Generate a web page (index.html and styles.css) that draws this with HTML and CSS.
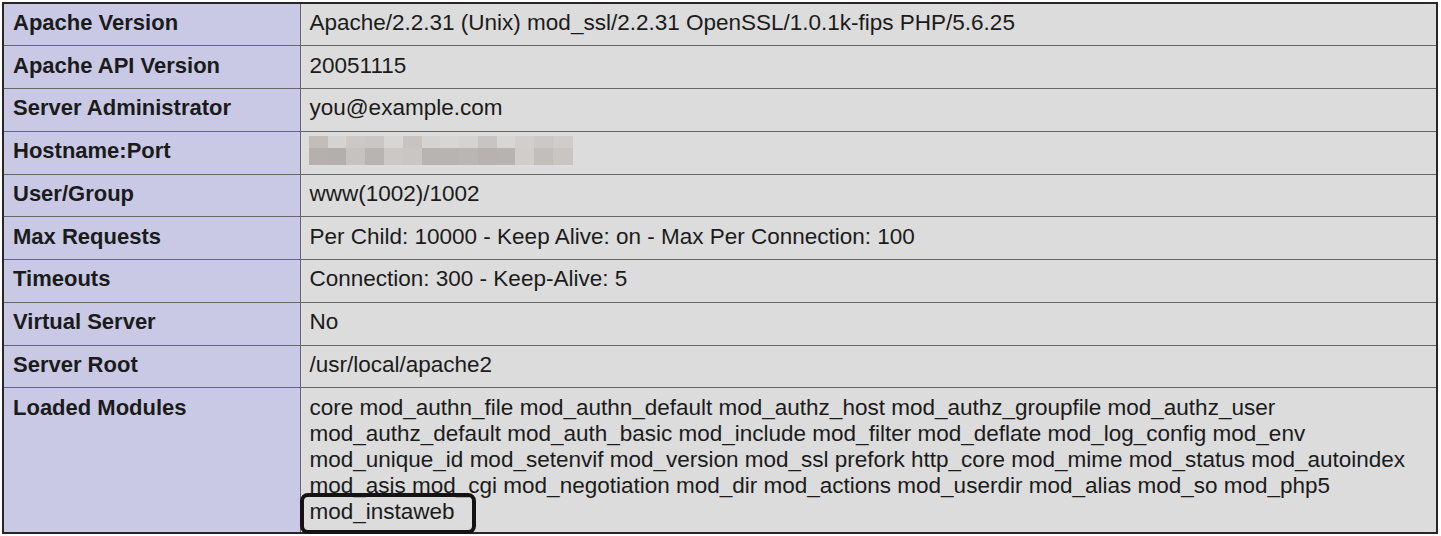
FILE: index.html
```html
<!DOCTYPE html>
<html lang="en">
<head>
<meta charset="utf-8">
<title>phpinfo - apache2handler</title>
<link rel="stylesheet" href="styles.css">
</head>
<body>
<table class="info">
  <tbody>
    <tr><td class="e">Apache Version</td><td class="v">Apache/2.2.31 (Unix) mod_ssl/2.2.31 OpenSSL/1.0.1k-fips PHP/5.6.25</td></tr>
    <tr><td class="e">Apache API Version</td><td class="v">20051115</td></tr>
    <tr><td class="e">Server Administrator</td><td class="v">you@example.com</td></tr>
    <tr><td class="e">Hostname:Port</td><td class="v">
      <svg class="blur" width="264" height="30" viewBox="0 0 264 30" aria-label="hidden hostname">
        <rect x="0" y="0" width="264" height="30" fill="#dcdcdc"/>
        <rect x="0" y="0" width="19" height="12" fill="#c0bdba"/>
        <rect x="19" y="0" width="18" height="12" fill="#d5d3d1"/>
        <rect x="37" y="0" width="19" height="12" fill="#cbc8c5"/>
        <rect x="56" y="0" width="19" height="12" fill="#c9c6c4"/>
        <rect x="75" y="0" width="19" height="12" fill="#d8d6d4"/>
        <rect x="94" y="0" width="19" height="12" fill="#c6c3c0"/>
        <rect x="113" y="0" width="18" height="12" fill="#d5d3d1"/>
        <rect x="131" y="0" width="19" height="12" fill="#d8d6d4"/>
        <rect x="150" y="0" width="19" height="12" fill="#d5d3d1"/>
        <rect x="169" y="0" width="19" height="12" fill="#c8c4c2"/>
        <rect x="188" y="0" width="18" height="12" fill="#d8d6d4"/>
        <rect x="206" y="0" width="19" height="12" fill="#d1cecc"/>
        <rect x="225" y="0" width="19" height="12" fill="#cbc8c6"/>
        <rect x="244" y="0" width="20" height="12" fill="#cfccca"/>
        <rect x="0" y="12" width="19" height="17" fill="#b5b0ad"/>
        <rect x="19" y="12" width="18" height="17" fill="#b3afac"/>
        <rect x="37" y="12" width="19" height="17" fill="#c5c2c0"/>
        <rect x="56" y="12" width="19" height="17" fill="#b8b4b1"/>
        <rect x="75" y="12" width="19" height="17" fill="#cbc8c6"/>
        <rect x="94" y="12" width="19" height="17" fill="#c9c6c4"/>
        <rect x="113" y="12" width="18" height="17" fill="#b8b4b1"/>
        <rect x="131" y="12" width="19" height="17" fill="#b8b4b1"/>
        <rect x="150" y="12" width="19" height="17" fill="#bab6b4"/>
        <rect x="169" y="12" width="19" height="17" fill="#b7b1b0"/>
        <rect x="188" y="12" width="18" height="17" fill="#b7b3b1"/>
        <rect x="206" y="12" width="19" height="17" fill="#d0cdcb"/>
        <rect x="225" y="12" width="19" height="17" fill="#c2beb9"/>
        <rect x="244" y="12" width="20" height="17" fill="#c8c5c3"/>
      </svg>
    </td></tr>
    <tr><td class="e">User/Group</td><td class="v">www(1002)/1002</td></tr>
    <tr><td class="e">Max Requests</td><td class="v">Per Child: 10000 - Keep Alive: on - Max Per Connection: 100</td></tr>
    <tr><td class="e">Timeouts</td><td class="v">Connection: 300 - Keep-Alive: 5</td></tr>
    <tr><td class="e">Virtual Server</td><td class="v">No</td></tr>
    <tr><td class="e">Server Root</td><td class="v">/usr/local/apache2</td></tr>
    <tr class="modules"><td class="e">Loaded Modules</td><td class="v">core mod_authn_file mod_authn_default mod_authz_host mod_authz_groupfile mod_authz_user mod_authz_default mod_auth_basic mod_include mod_filter mod_deflate mod_log_config mod_env mod_unique_id mod_setenvif mod_version mod_ssl prefork http_core mod_mime mod_status mod_autoindex mod_asis mod_cgi mod_negotiation mod_dir mod_actions mod_userdir mod_alias mod_so mod_php5 <span class="mark">mod_instaweb</span></td></tr>
  </tbody>
</table>
</body>
</html>
```

FILE: styles.css
```css
html, body {
  margin: 0;
  padding: 0;
  background: #ffffff;
}

body {
  padding: 2px 0 0 2px;
  font-family: "Liberation Sans", Arial, sans-serif;
  font-size: 22px;
  line-height: 26px;
  color: #1b1b1b;
}

.info {
  border-collapse: collapse;
  width: 1436px;
  table-layout: fixed;
  border: 2px solid #2b2626;
}

.info td {
  border: 1px solid #666666;
  height: 42.78px;
  box-sizing: border-box;
  vertical-align: middle;
  overflow: visible;
  padding-top: 0;
  padding-bottom: 3px;
}

.info td.e {
  width: 297px;
  padding-left: 9px;
  padding-right: 9px;
  background: #c9c9e5;
  font-weight: bold;
}

.info td.v {
  padding-left: 9px;
  padding-right: 9px;
  background: #dcdcdc;
  font-size: 22.5px;
}

.info .modules td {
  height: 145px;
  vertical-align: top;
  padding-top: 7px;
  padding-bottom: 0;
}

.blur {
  display: block;
  margin-left: -1px;
}

.mark {
  position: relative;
}

.mark::after {
  content: "";
  position: absolute;
  left: -10px;
  right: -21px;
  top: -6px;
  bottom: -10px;
  border: 4px solid #141212;
  border-radius: 8px;
}
```
